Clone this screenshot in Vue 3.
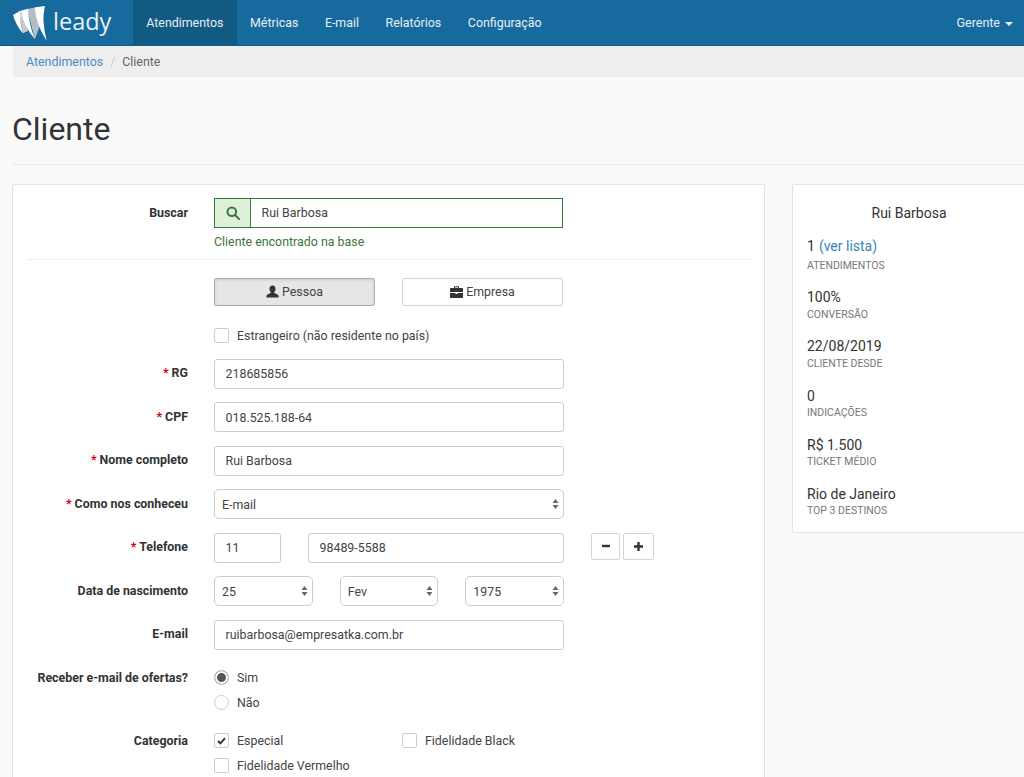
<template>
  <div class="page">
    <nav class="navbar">
      <a class="brand">
        <svg class="brand-mark" width="36" height="38" viewBox="0 0 36 38">
          <path d="M7 6 L11 5.5 L16 26 L10.7 28.3 Z" fill="#c4cad0" />
          <path d="M1 10 L8 6 Q8 18 10.7 28.3 Q4 20 1 10 Z" fill="#fff" />
          <path d="M15 4 L23 2.5 L28 20 L23 34.3 Z" fill="#b4bcc4" />
          <path d="M9 5.7 L16 3.7 Q17 20 23 34.3 Q12 22 9 5.7 Z" fill="#fff" />
          <path d="M22.5 2.5 L33 1 C31.6 7 31.2 12 31.6 17 C32 24 33.4 30 34.7 35.7 Q25 22 22.5 2.5 Z" fill="#fff" />
        </svg>
        <span class="brand-name">leady</span>
      </a>
      <ul class="nav-list">
        <li v-for="item in menu" :key="item" :class="{ active: item === 'Atendimentos' }">{{ item }}</li>
      </ul>
      <div class="nav-user">Gerente <span class="caret"></span></div>
    </nav>

    <div class="breadcrumb">
      <a>Atendimentos</a>
      <span class="sep">/</span>
      <span class="current">Cliente</span>
    </div>

    <header class="page-header">
      <h1>Cliente</h1>
    </header>

    <div class="content">
      <section class="panel form-panel">
        <div class="row">
          <label>Buscar</label>
          <div class="control">
            <div class="search-group">
              <span class="search-addon">
                <svg width="14" height="14" viewBox="0 0 14 14" fill="none" stroke="#3c763d" stroke-width="2">
                  <circle cx="5.8" cy="5.8" r="4.3" />
                  <path d="M9 9 L13 13" stroke-linecap="round" />
                </svg>
              </span>
              <input class="search-input" value="Rui Barbosa" />
            </div>
            <p class="help">Cliente encontrado na base</p>
          </div>
        </div>

        <hr class="divider" />

        <div class="row toggle-row">
          <label></label>
          <div class="control toggles">
            <button class="toggle on">
              <svg width="13" height="13" viewBox="0 0 13 13" fill="#333">
                <path d="M6.5 0.5 C8.4 0.5 9.5 2 9.5 4 C9.5 5.4 9 6.5 8.2 7.2 L8.2 8 C9.8 8.7 12.4 9.4 12.6 11 L12.6 12.6 L0.4 12.6 L0.4 11 C0.6 9.4 3.2 8.7 4.8 8 L4.8 7.2 C4 6.5 3.5 5.4 3.5 4 C3.5 2 4.6 0.5 6.5 0.5 Z" />
              </svg>
              Pessoa
            </button>
            <button class="toggle">
              <svg width="13" height="12" viewBox="0 0 13 12" fill="#333">
                <path d="M4 2 L4 1 C4 0.5 4.4 0.2 4.9 0.2 L8.1 0.2 C8.6 0.2 9 0.5 9 1 L9 2 L12 2 C12.6 2 13 2.4 13 3 L13 6 L0 6 L0 3 C0 2.4 0.4 2 1 2 Z M5 2 L8 2 L8 1.2 L5 1.2 Z" fill-rule="evenodd" />
                <path d="M0 7 L5.5 7 L5.5 8 L7.5 8 L7.5 7 L13 7 L13 11 C13 11.6 12.6 12 12 12 L1 12 C0.4 12 0 11.6 0 11 Z" />
              </svg>
              Empresa
            </button>
          </div>
        </div>

        <div class="row foreign-row">
          <label></label>
          <div class="control">
            <span class="check-item"><span class="box"></span>Estrangeiro (não residente no país)</span>
          </div>
        </div>

        <div class="fields">
          <div class="row">
            <label><i>*</i> RG</label>
            <div class="control"><input value="218685856" /></div>
          </div>
          <div class="row">
            <label><i>*</i> CPF</label>
            <div class="control"><input value="018.525.188-64" /></div>
          </div>
          <div class="row">
            <label><i>*</i> Nome completo</label>
            <div class="control"><input value="Rui Barbosa" /></div>
          </div>
          <div class="row">
            <label><i>*</i> Como nos conheceu</label>
            <div class="control">
              <div class="select">
                <select><option>E-mail</option></select>
                <svg class="updown" width="7" height="12" viewBox="0 0 7 12" fill="#666"><path d="M3.5 1 L6.5 5 L0.5 5 Z M0.5 7 L6.5 7 L3.5 11 Z" /></svg>
              </div>
            </div>
          </div>
          <div class="row">
            <label><i>*</i> Telefone</label>
            <div class="control phone">
              <input class="ddd" value="11" />
              <input class="number" value="98489-5588" />
            </div>
            <div class="phone-actions">
              <button class="mini">
                <svg width="10" height="10" viewBox="0 0 10 10"><path d="M1 5 H9" stroke="#333" stroke-width="2.4" /></svg>
              </button>
              <button class="mini wide">
                <svg width="11" height="11" viewBox="0 0 11 11"><path d="M1 5.5 H10 M5.5 1 V10" stroke="#333" stroke-width="2.4" /></svg>
              </button>
            </div>
          </div>
          <div class="row">
            <label>Data de nascimento</label>
            <div class="control dates">
              <div v-for="d in dates" :key="d" class="select">
                <select><option>{{ d }}</option></select>
                <svg class="updown" width="7" height="12" viewBox="0 0 7 12" fill="#666"><path d="M3.5 1 L6.5 5 L0.5 5 Z M0.5 7 L6.5 7 L3.5 11 Z" /></svg>
              </div>
            </div>
          </div>
          <div class="row">
            <label>E-mail</label>
            <div class="control"><input value="ruibarbosa@empresatka.com.br" /></div>
          </div>
        </div>

        <div class="row offers">
          <label>Receber e-mail de ofertas?</label>
          <div class="control radios">
            <span class="check-item"><span class="radio checked"></span>Sim</span>
            <span class="check-item"><span class="radio"></span>Não</span>
          </div>
        </div>

        <div class="row categories">
          <label>Categoria</label>
          <div class="control category-grid">
            <span class="check-item">
              <span class="box">
                <svg width="9" height="8" viewBox="0 0 9 8" fill="none" stroke="#333" stroke-width="2"><path d="M1 4 L3.4 6.4 L8 1.2" /></svg>
              </span>
              Especial
            </span>
            <span class="check-item"><span class="box"></span>Fidelidade Black</span>
            <span class="check-item"><span class="box"></span>Fidelidade Vermelho</span>
          </div>
        </div>
      </section>

      <aside class="panel side-panel">
        <h4>Rui Barbosa</h4>
        <div v-for="s in stats" :key="s.label" class="stat">
          <div class="stat-value">{{ s.value }}<a v-if="s.link">{{ s.link }}</a></div>
          <div class="stat-label">{{ s.label }}</div>
        </div>
      </aside>
    </div>
  </div>
</template>

<script setup>
const menu = ['Atendimentos', 'Métricas', 'E-mail', 'Relatórios', 'Configuração']
const dates = ['25', 'Fev', '1975']
const stats = [
  { value: '1', link: '(ver lista)', label: 'Atendimentos' },
  { value: '100%', label: 'Conversão' },
  { value: '22/08/2019', label: 'Cliente desde' },
  { value: '0', label: 'Indicações' },
  { value: 'R$ 1.500', label: 'Ticket médio' },
  { value: 'Rio de Janeiro', label: 'Top 3 destinos' }
]
</script>

<style>
body {
  margin: 0;
  background: #fafafa;
}
</style>

<style scoped>
.page {
  width: 1024px;
  height: 777px;
  overflow: hidden;
  background: #fafafa;
  color: #333;
  font-family: Roboto, "Liberation Sans", sans-serif;
  font-size: 12.4px;
}

.navbar {
  display: flex;
  align-items: stretch;
  height: 46px;
  box-sizing: border-box;
  background: #176a9d;
  border-bottom: 1px solid #125a86;
  color: #e6eff5;
}

.brand {
  display: flex;
  align-items: center;
  width: 133px;
  padding-left: 12px;
  box-sizing: border-box;
}

.brand-mark {
  flex-shrink: 0;
  margin-top: 3px;
}

.brand-name {
  margin-left: 5px;
  margin-top: -3px;
  color: #eaf2f7;
  font-family: "Open Sans", sans-serif;
  font-size: 23.5px;
  font-weight: 400;
}

.nav-list {
  display: flex;
  margin: 0;
  padding: 0;
  list-style: none;
}

.nav-list li {
  display: flex;
  align-items: center;
  padding: 0 13.3px;
  font-size: 12.4px;
}

.nav-list li.active {
  background: #115a82;
}

.nav-user {
  display: flex;
  align-items: center;
  margin-left: auto;
  padding-right: 11px;
  font-size: 12.5px;
}

.caret {
  display: inline-block;
  margin-left: 5px;
  margin-top: 2px;
  border-top: 4px solid #e6eff5;
  border-left: 4px solid transparent;
  border-right: 4px solid transparent;
}

.breadcrumb {
  display: flex;
  align-items: center;
  height: 31px;
  margin-left: 13px;
  padding-left: 13px;
  background: #eee;
  font-size: 12.4px;
}

.breadcrumb a {
  color: #4a8bc4;
}

.sep {
  margin: 0 7px;
  color: #ccc;
}

.current {
  color: #666;
}

.page-header {
  margin-left: 12px;
  height: 88px;
  box-sizing: border-box;
  border-bottom: 1px solid #eaeaea;
}

h1 {
  margin: 0;
  padding-top: 33px;
  color: #333;
  font-size: 32px;
  font-weight: 400;
  line-height: 38px;
}

.content {
  display: flex;
  align-items: flex-start;
  gap: 27px;
  margin: 19px 0 0 12px;
}

.panel {
  flex-shrink: 0;
  box-sizing: border-box;
  background: #fff;
  border: 1px solid #e3e3e3;
  border-radius: 2px;
}

.form-panel {
  width: 753px;
  height: 640px;
  padding: 13px 12px 13px 14px;
}

.row {
  display: flex;
  align-items: flex-start;
}

.row > label {
  flex: 0 0 161px;
  margin-right: 26px;
  padding-top: 6.5px;
  text-align: right;
  font-weight: 700;
  font-size: 12.4px;
  line-height: 16px;
  color: #333;
}

.row > label i {
  color: #d0021b;
  font-style: normal;
}

.control {
  width: 350px;
}

input,
select {
  display: block;
  width: 100%;
  height: 30px;
  box-sizing: border-box;
  padding: 0 10.5px;
  background: #fff;
  border: 1px solid #ccc;
  border-radius: 3px;
  color: #444;
  font-family: inherit;
  font-size: 12.4px;
}

select {
  padding: 0 7px;
  appearance: none;
  border-radius: 5px;
}

.select {
  position: relative;
}

.updown {
  position: absolute;
  top: 9px;
  right: 5px;
}

.search-group {
  display: flex;
  width: 349px;
  height: 30px;
  box-sizing: border-box;
  border: 1px solid #3c763d;
}

.search-addon {
  display: flex;
  align-items: center;
  justify-content: center;
  width: 35px;
  background: #dff0d8;
  border-right: 1px solid #3c763d;
}

.search-input {
  flex: 1;
  height: 28px;
  padding-bottom: 2px;
  border: 0;
  border-radius: 0;
}

.help {
  margin: 6px 0 0;
  color: #3c763d;
  line-height: 15px;
}

.divider {
  height: 1px;
  margin: 10px 0 18px;
  border: 0;
  background: #eee;
}

.toggles {
  display: flex;
  gap: 27px;
  width: 349px;
}

.toggle {
  flex: 1;
  display: flex;
  align-items: center;
  justify-content: center;
  gap: 3px;
  height: 28px;
  padding: 0 0 1px;
  background: #fff;
  border: 1px solid #d5d5d5;
  border-radius: 2px;
  color: #444;
  font-family: inherit;
  font-size: 12.4px;
}

.toggle.on {
  background: #e6e6e6;
  border-color: #adadad;
  box-shadow: inset 0 1px 3px rgba(0, 0, 0, 0.12);
}

.foreign-row {
  margin-top: 22px;
}

.check-item {
  display: flex;
  align-items: center;
  gap: 8px;
  height: 15px;
  color: #444;
  white-space: nowrap;
}

.box {
  display: flex;
  align-items: center;
  justify-content: center;
  width: 15px;
  height: 15px;
  box-sizing: border-box;
  background: #fff;
  border: 1px solid #ccc;
  border-radius: 2px;
}

.radio {
  width: 15px;
  height: 15px;
  box-sizing: border-box;
  background: #fff;
  border: 1px solid #ccc;
  border-radius: 50%;
}

.radio.checked {
  background: #555;
  box-shadow: inset 0 0 0 2px #fff;
}

.fields {
  display: flex;
  flex-direction: column;
  gap: 13.5px;
  margin-top: 15.5px;
}

.phone {
  display: flex;
  gap: 27px;
}

.ddd {
  flex: 0 0 67px;
}

.number {
  flex: 1;
}

.phone-actions {
  display: flex;
  gap: 3px;
  margin-left: 27px;
}

.mini {
  display: flex;
  align-items: center;
  justify-content: center;
  width: 29px;
  height: 27px;
  padding: 0;
  background: #fff;
  border: 1px solid #d5d5d5;
  border-radius: 2px;
}

.mini.wide {
  width: 31px;
}

.dates {
  display: flex;
  gap: 27px;
}

.dates .select {
  flex: 1;
}

.offers {
  margin-top: 20.5px;
}

.offers > label,
.categories > label {
  padding-top: 0;
}

.radios {
  display: flex;
  flex-direction: column;
  gap: 10px;
}

.categories {
  margin-top: 23px;
}

.category-grid {
  display: grid;
  grid-template-columns: 188px 1fr;
  row-gap: 10px;
}

.side-panel {
  width: 260px;
  height: 349px;
  padding: 20px 14px;
}

h4 {
  width: 204px;
  margin: 0 0 16px;
  text-align: center;
  font-size: 14px;
  font-weight: 400;
  line-height: 16px;
}

.stat {
  height: 49.2px;
}

.stat-value {
  padding-top: 2px;
  color: #333;
  font-size: 14px;
  line-height: 18px;
}

/* first row carries the link and sits a bit higher */
.stat:nth-child(2) .stat-value {
  padding-top: 0;
  padding-bottom: 2px;
}

.stat-value a {
  margin-left: 4px;
  color: #3a85bd;
}

.stat-label {
  margin-top: 1.5px;
  color: #777;
  font-size: 10.5px;
  line-height: 13px;
  text-transform: uppercase;
}
</style>
